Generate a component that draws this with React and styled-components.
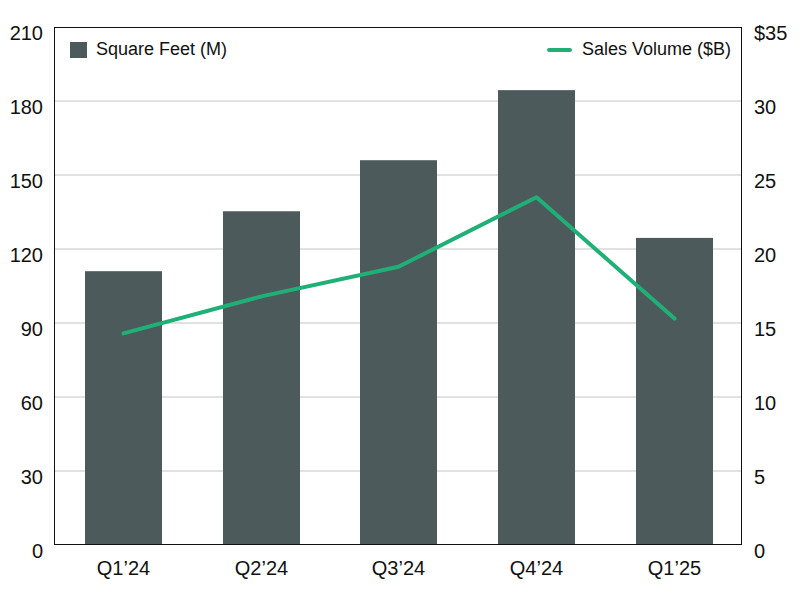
import styled, { createGlobalStyle } from "styled-components";

const Global = createGlobalStyle`
  body {
    margin: 0;
    background: #fff;
    font-family: "Liberation Sans", Arial, sans-serif;
    color: #111;
  }
`;

const W = 688;
const H = 518;
const BAR = "#4d5a5c";
const LINE = "#1fb077";

const quarters = [
  { label: "Q1\u201924", x: 31, sq: 111, sales: 14.3 },
  { label: "Q2\u201924", x: 169, sq: 135.3, sales: 16.8 },
  { label: "Q3\u201924", x: 306, sq: 156, sales: 18.8 },
  { label: "Q4\u201924", x: 444, sq: 184.4, sales: 23.5 },
  { label: "Q1\u201925", x: 582, sq: 124.5, sales: 15.3 },
];
const leftTicks = [210, 180, 150, 120, 90, 60, 30, 0];
const rightTicks = ["$35", "30", "25", "20", "15", "10", "5", "0"];

const Chart = styled.div`
  padding-top: 27px;
  width: 800px;
`;

const Row = styled.div`
  display: flex;
`;

const Axis = styled.div`
  position: relative;
  width: ${(p) => p.$w}px;
  height: ${H}px;
`;

const Tick = styled.span`
  position: absolute;
  ${(p) => (p.$side === "left" ? "right: 11px;" : "left: 12px;")}
  transform: translateY(-50%);
  font-size: 20px;
  line-height: 1;
  margin-top: 6px;
`;

const Plot = styled.div`
  position: relative;
  width: ${W}px;
  height: ${H}px;
  box-sizing: border-box;
  border: 1px solid #111;
  border-bottom-width: 1.5px;
  svg {
    display: block;
  }
`;

const Legend = styled.div`
  position: absolute;
  top: 11px;
  ${(p) => (p.$right ? "right: 10px;" : "left: 15px;")}
  display: flex;
  align-items: center;
  gap: 9px;
  font-size: 18px;
`;

const Swatch = styled.span`
  width: 17px;
  height: 16px;
  background: ${BAR};
`;

const Dash = styled.span`
  width: 25px;
  height: 4px;
  border-radius: 2px;
  background: ${LINE};
  margin-right: 1px;
`;

const XLabels = styled.div`
  position: relative;
  margin-left: 54px;
  width: ${W}px;
  height: 40px;
`;

const XLabel = styled.span`
  position: absolute;
  top: 12px;
  transform: translateX(-50%);
  font-size: 20px;
`;

const yL = (v) => H - (v / 210) * H;
const yR = (v) => H - (v / 35) * H;

export default function App() {
  const pts = quarters.map((q) => `${q.x + 38.5},${yR(q.sales)}`).join(" ");
  return (
    <Chart>
      <Global />
      <Row>
        <Axis $w={54}>
          {leftTicks.map((t) => (
            <Tick key={t} $side="left" style={{ top: yL(t) }}>
              {t}
            </Tick>
          ))}
        </Axis>
        <Plot>
          <svg width={W - 2} height={H - 2} viewBox={`1 1 ${W - 2} ${H - 2}`}>
            {leftTicks.slice(1, -1).map((t) => (
              <line key={t} x1="0" x2={W} y1={yL(t)} y2={yL(t)} stroke="#c4c4c4" strokeWidth="1" />
            ))}
            {quarters.map((q) => (
              <rect key={q.label} x={q.x} y={yL(q.sq)} width="77" height={H - yL(q.sq)} fill={BAR} />
            ))}
            <polyline points={pts} fill="none" stroke={LINE} strokeWidth="4" strokeLinejoin="round" strokeLinecap="round" />
          </svg>
          <Legend>
            <Swatch />
            Square Feet (M)
          </Legend>
          <Legend $right>
            <Dash />
            Sales Volume ($B)
          </Legend>
        </Plot>
        <Axis $w={58}>
          {rightTicks.map((t, i) => (
            <Tick key={t} $side="right" style={{ top: (i / 7) * H }}>
              {t}
            </Tick>
          ))}
        </Axis>
      </Row>
      <XLabels>
        {quarters.map((q) => (
          <XLabel key={q.label} style={{ left: q.x + 38.5 }}>
            {q.label}
          </XLabel>
        ))}
      </XLabels>
    </Chart>
  );
}
